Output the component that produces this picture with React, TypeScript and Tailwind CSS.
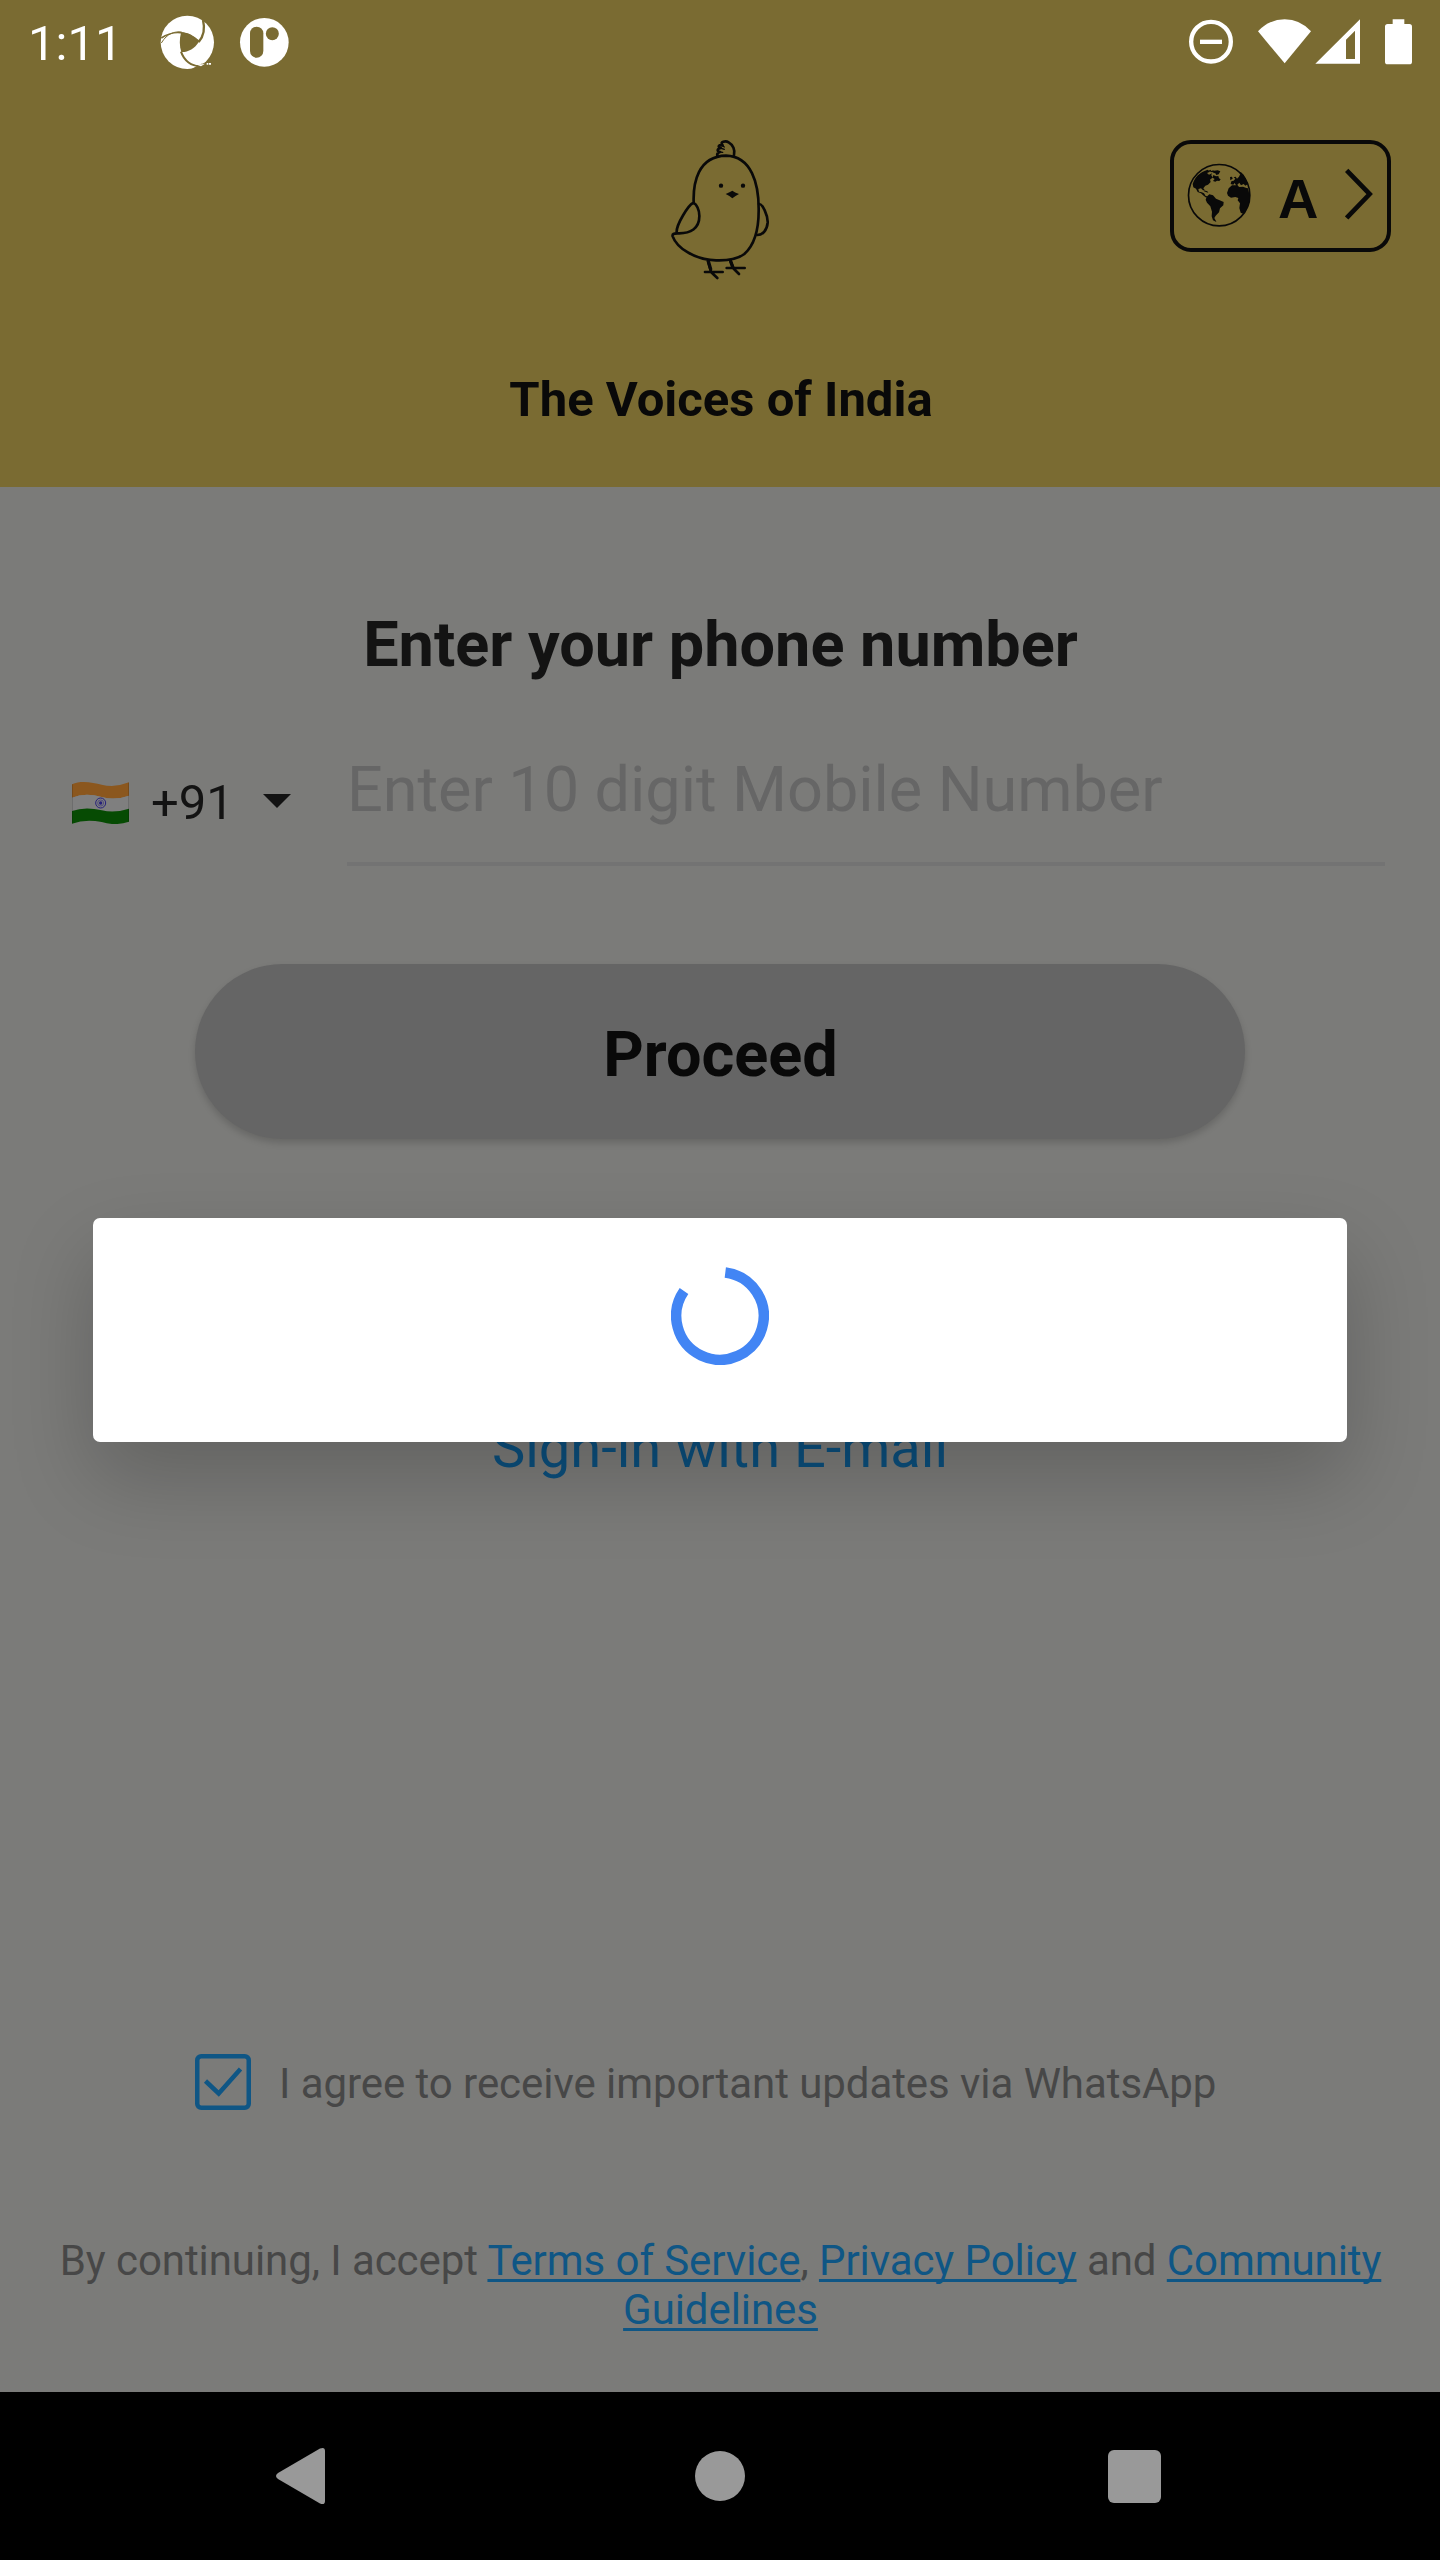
function StatusBar() {
  return (
    <div className="flex h-[90px] items-start pl-[28px] pr-[27px] text-white">
      <span className="mt-[11px] text-[49px] leading-[66px]">1:11</span>
      <svg className="ml-auto mt-[15px] h-[55px] w-[55px]" viewBox="480 45 165 165" fill="currentColor">
        <circle cx="562" cy="127" r="80" />
        <g className="text-[#7a6b32]">
          <path d="M543 98 C560 96 582 106 597 125 C584 146 563 157 544 156 C538 139 538 116 543 98Z" />
          <path d="M484 114 C508 98 550 84 598 125" fill="none" stroke="currentColor" strokeWidth="5" />
          <path d="M609 60 C616 88 608 112 596 126" fill="none" stroke="currentColor" strokeWidth="7" />
          <path d="M484 129 C502 99 524 94 545 96" fill="none" stroke="currentColor" strokeWidth="3" />
          <path d="M543 155 C552 182 574 200 604 198" fill="none" stroke="currentColor" strokeWidth="6" />
          <path d="M574 207 L604 191 L625 190 L620 207Z" />
        </g>
        <path d="M575 189 Q595 196 615 191 L603 199Z M620 189h5v5h-5z M627 189h6v5h-6z" />
      </svg>
      <svg className="ml-6 mt-[17px] h-[51px] w-[51px]" viewBox="717 51 153 153" fill="currentColor">
        <circle cx="793" cy="127" r="73" />
        <g className="text-[#7a6b32]">
          <rect x="750" y="80" width="40" height="93" rx="20" />
          <circle cx="817" cy="101" r="19.500" />
        </g>
      </svg>
      <svg className="ml-[898px] mt-[18px] h-[47px] w-[46px]" viewBox="84 54 138 141" fill="none" stroke="currentColor" strokeWidth="13">
        <circle cx="153" cy="125" r="59.500" />
        <path d="M120 125.500h66" />
      </svg>
      <svg className="ml-[23px] mt-[18px] h-[46px] w-[55px]" viewBox="291 54 165 138" fill="currentColor">
        <path d="M294 94 Q327 58 374 58 Q420 58 453 94 L374 190Z" />
      </svg>
      <svg className="ml-[3px] mt-[18px] h-[46px] w-[46px]" viewBox="465 54 138 138" fill="currentColor">
        <path fillRule="evenodd" d="M600 58 V191 H466Z M585 92 L558 119 V177 H585Z" />
      </svg>
      <svg className="ml-[23px] mt-[18px] h-[48px] w-[29px]" viewBox="672 54 87 144" fill="currentColor">
        <path d="M698 58h35v14h15q8 0 8 8v105q0 8-8 8h-65q-8 0-8-8v-105q0-8 8-8h15z" />
      </svg>
    </div>
  );
}

function ChickLogo() {
  return (
    <svg className="h-[180px] w-[140px]" viewBox="0 0 420 540" fill="none" stroke="currentColor" strokeWidth="8" strokeLinecap="round" strokeLinejoin="round">
      <path d="M131 248 C129 190 143 109 228 107 C304 109 327 190 326 272 C326 325 313 375 283 402 C258 421 225 422 198 421 C131 419 80 382 68 349 C66 341 72 341 84 340 C121 341 149 326 148 287 C148 270 140 251 129 249 C116 255 78 313 80 338" />
      <path d="M327 252 C337 250 354 286 353 308 C351 332 337 345 322 345" />
      <path d="M202 107 C200 100 204 98 210 96 C201 94 200 87 212 84 C201 79 207 74 218 76 C207 64 228 62 236 67 C249 74 256 91 252 105" />
      <path d="M209 96l9 1 M211 84l12 4 M214 75l9 6" strokeWidth="4" />
      <circle cx="213" cy="197" r="6.500" fill="currentColor" stroke="none" />
      <circle cx="279" cy="197" r="6.500" fill="currentColor" stroke="none" />
      <path d="M227 222 Q240 216 247 212 Q254 218 267 222 Q254 229 247 235 Q240 228 227 222Z" fill="currentColor" stroke="none" />
      <path d="M174 424 L183 454 M165 456h53 M183 456l19 18 M241 422l9 21 M230 444h54 M249 444l18 18" />
      <path d="M175 424l7 24 M242 424l6 17" strokeWidth="10" />
    </svg>
  );
}

function Globe() {
  return (
    <svg className="mb-[2px] h-[64px] w-[64px]" viewBox="112 130 192 192" fill="currentColor">
      <circle cx="208.500" cy="226.500" r="92" fill="none" stroke="currentColor" strokeWidth="5" />
      <path d="M129 193 C136 172 150 160 163 155 L174 150 L181 156 L172 160 L178 165 L187 161 L184 168 L190 173 L181 180 L183 187 L175 195 L167 198 L161 206 L165 211 L160 212 L154 206 L146 208 L148 216 L156 218 L163 221 L168 229 L173 230 L170 234 L162 228 L154 221 L144 217 L139 207 L131 203Z" />
      <path d="M176 154l6-4 3 4 6-2 4 4-8 2-4-2zM193 153l11-1 8 3-5 9-7 2-3-5-7-2zM191 166l8 4 7-1 2 7 5 3-4 5-7-1-5 3-7-2 5-6-6-4zM181 167l6 1-1 5-6-1zM162 212l11 3 3 4-5-1-8-3z" />
      <path d="M171 231 L179 224 L190 227 L199 237 L210 242 L222 247 L221 257 L211 266 L208 278 L198 288 L194 295 L199 304 L200 307 L190 302 L186 290 L187 276 L182 260 L172 249 L168 240Z" />
      <path d="M237 206 L247 197 L262 197 L269 202 L280 201 L290 205 L294 205 C304 232 301 258 282 283 L273 279 L269 265 L271 251 L264 242 L266 235 L257 232 L244 234 L235 228 L232 220Z" />
      <path d="M243 193l2-8 7-2 5-6-5-4 6-2 4 6 6-6 4-8-5-4 7-1 8 7 7 13 5 16-7 4-5-5-8 4-5-8-6 6 3 6-6-3-5-8-4 5z" />
      <path d="M241 172l6-1 2 6-7 5z" />
    </svg>
  );
}

function Header() {
  return (
    <header className="flex h-[487px] flex-col bg-[#7a6b32] text-[#090909]">
      <StatusBar />
      <div className="mt-[30px] grid grid-cols-[1fr_140px_1fr] items-start">
        <span />
        <ChickLogo />
        <button className="mr-[49px] mt-[20px] flex h-[112px] w-[221px] items-center justify-self-end rounded-[21px] border-4 border-[#090909] pl-[13px]">
          <Globe />
          <span className="ml-[27px] mt-[5px] text-[56px] font-bold leading-[60px] [font-family:'Liberation_Sans',sans-serif]">A</span>
          <svg className="mb-[4px] ml-auto mr-[14px] h-[52px] w-[28px]" viewBox="585 142 84 156" fill="none" stroke="currentColor" strokeWidth="14">
            <path d="M590 149 L659 220 L590 292" />
          </svg>
        </button>
      </div>
      <h1 className="mt-[67px] pl-[2px] text-center text-[49px] font-bold leading-[66px]">The Voices of India</h1>
    </header>
  );
}

function IndiaFlag() {
  return (
    <svg className="h-[42px] w-[57px]" viewBox="36 67 171 126">
      <path d="M36 74 C65 61 100 70 125 75 Q165 85 207 68 V108 Q165 123 125 112 Q75 98 36 114Z" fill="#8b571e" />
      <path d="M36 114 Q75 98 125 112 Q165 123 207 108 V147 Q165 161 125 152 Q75 140 36 154Z" fill="#7f7f7f" />
      <path d="M36 154 Q75 140 125 152 Q165 161 207 147 V186 Q165 200 125 187 Q75 178 36 192Z" fill="#064b03" />
      <path d="M37.500 74V191 M205.500 69V186" stroke="#000" strokeOpacity=".14" strokeWidth="3" />
      <g fill="none" stroke="#26217b">
        <circle cx="122" cy="130" r="15" strokeWidth="3" />
        <circle cx="122" cy="130" r="9" strokeWidth="3" opacity=".5" />
      </g>
      <circle cx="122" cy="130" r="5" fill="#26217b" />
    </svg>
  );
}

function PhoneRow() {
  return (
    <div className="mt-[47px] flex h-[134px] items-start pl-[72px] pr-[55px]">
      <div className="mt-[38px] flex h-[66px] w-[275px] items-center">
        <IndiaFlag />
        <span className="ml-[22px] text-[49px] leading-[66px] text-[#131313]">+91</span>
        <svg className="mb-[4px] ml-auto mr-[56px] h-[14px] w-[28px] text-[#131313]" viewBox="0 0 28 14" fill="currentColor">
          <path d="M0 0h28L14 14z" />
        </svg>
      </div>
      <div className="h-[134px] flex-1 border-b-4 border-[#737373] text-[63px] leading-[84px] tracking-[-0.05px] text-[#666666]">
        <span className="mt-[16px] block">Enter 10 digit Mobile Number</span>
      </div>
    </div>
  );
}

function Spinner() {
  return (
    <svg className="h-[98px] w-[98px]" viewBox="-49 -49 98 98" fill="none" stroke="#4285f4" strokeWidth="10.500">
      <path d="M5.300 -43.430 A43.750 43.750 0 1 1 -36 -24.900" />
    </svg>
  );
}

function LoadingDialog() {
  return (
    <div className="absolute left-[93px] top-[1218px] flex h-[224px] w-[1254px] justify-center rounded-[7px] bg-white pt-[49px] shadow-[0_36px_84px_rgba(0,0,0,0.2)]">
      <Spinner />
    </div>
  );
}

function SystemNav() {
  return (
    <nav className="flex h-[168px] items-center bg-black pl-[275px] pr-[279px] text-[#999999]">
      <svg className="h-[58px] w-[50px]" viewBox="0 0 50 58" fill="currentColor">
        <path d="M45 1.500 Q50 -.500 50 4 V54 Q50 58.500 45 56.500 L3 32 Q-1 29 3 26Z" />
      </svg>
      <span className="ml-[370px] h-[50px] w-[50px] rounded-full bg-[#999999]" />
      <span className="ml-auto h-[53px] w-[53px] rounded-[6px] bg-[#999999]" />
    </nav>
  );
}

export default function App() {
  return (
    <div className="relative flex h-[2560px] w-[1440px] flex-col overflow-hidden bg-[#7b7b79] [font-family:Roboto,sans-serif]">
      <Header />
      <main className="flex flex-1 flex-col">
        <h2 className="mt-[118px] pl-px text-center text-[63px] font-bold leading-[80px] text-[#131313]">Enter your phone number</h2>
        <PhoneRow />
        <button className="mx-[195px] mt-[98px] h-[175px] rounded-full bg-[#656565] pl-px pt-[7px] text-[63px] font-bold text-[#090909] shadow-[0_4px_7px_rgba(0,0,0,0.16)]">
          Proceed
        </button>
        <a className="mt-[269px] text-center text-[56px] leading-[80px] text-[#0b4f7d]">Sign-in with E-mail</a>
        <label className="mt-[566px] flex h-[56px] items-center pl-[195px] text-[42px] text-[#474747]">
          <svg className="h-[56px] w-[56px]" viewBox="0 0 56 56" fill="none" stroke="#0f5685" strokeWidth="4.500">
            <rect x="2.250" y="2.250" width="51.500" height="51.500" rx="4" />
            <path d="M10.500 27 L23.700 39.500 L45.500 15" />
          </svg>
          <span className="ml-[28px] mt-[4px] leading-[56px] tracking-[-0.06px]">I agree to receive important updates via WhatsApp</span>
        </label>
        <p className="mt-[126px] pl-px text-center text-[42px] leading-[49px] tracking-[-0.07px] text-[#474747]">
          By continuing, I accept <a className="text-[#0f5685] underline decoration-[3px] underline-offset-[4px] [text-decoration-skip-ink:none]">Terms of Service</a>,{" "}
          <a className="text-[#0f5685] underline decoration-[3px] underline-offset-[4px] [text-decoration-skip-ink:none]">Privacy Policy</a> and{" "}
          <a className="text-[#0f5685] underline decoration-[3px] underline-offset-[4px] [text-decoration-skip-ink:none]">Community<br />Guidelines</a>
        </p>
      </main>
      <SystemNav />
      <LoadingDialog />
    </div>
  );
}
